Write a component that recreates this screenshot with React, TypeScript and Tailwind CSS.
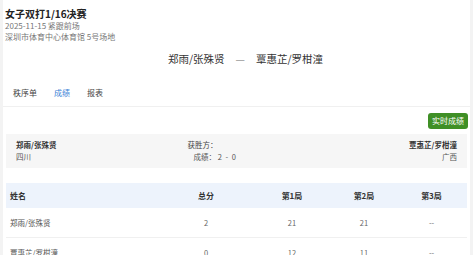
import React from 'react';

const rows = [
    { name: '郑雨/张殊贤', total: '2', g1: '21', g2: '21', g3: '--' },
    { name: '覃惠芷/罗柑潼', total: '0', g1: '12', g2: '11', g3: '--' },
];

const cols = 'grid grid-cols-[154px_92px_80px_64px_71px]';

export default function App() {
    return (
        <div
            className="w-[473px] h-[255px] overflow-hidden bg-[#f3f3f3] px-[3px]"
            style={{ fontFamily: '"Noto Sans CJK SC", "Noto Sans", sans-serif' }}
        >
            <div className="h-full bg-white">
                {/* header */}
                <div className="pl-[2px] pt-[7px]">
                    <h1 className="text-[10px] leading-[13px] font-bold text-[#222]">女子双打1/16决赛</h1>
                    <p className="text-[8px] leading-[11px] text-[#777]">2025-11-15 紧跟前场</p>
                    <p className="text-[8px] leading-[11px] text-[#777]">深圳市体育中心体育馆 5号场地</p>
                </div>

                <div className="mt-[10px] flex justify-center gap-[11px] text-[10.5px] leading-[14px] text-[#333] pl-[18px]">
                    <span>郑雨/张殊贤</span>
                    <span className="text-[#999]">—</span>
                    <span>覃惠芷/罗柑潼</span>
                </div>

                {/* tabs */}
                <div className="mt-[21px] flex gap-[17px] pl-[10px] pb-[7px] border-b border-[#f0f0f0] text-[8px] leading-[12px] text-[#444]">
                    <span>秩序单</span>
                    <span className="text-[#3b7fd6]">成绩</span>
                    <span>报表</span>
                </div>

                <div className="flex justify-end pr-[2px] pt-[6px]">
                    <button className="h-[16px] px-[4px] rounded-[3px] bg-[#3f8f26] text-white text-[8px] leading-[16px]">
                        实时成绩
                    </button>
                </div>

                {/* winner box */}
                <div className="mx-[3px] mt-[5px] h-[34px] bg-[#f6f6f6] px-[10px] py-[5px] flex text-[7.5px] leading-[12px]">
                    <div className="flex-1">
                        <div className="font-bold text-[#333]">郑雨/张殊贤</div>
                        <div className="text-[#555]">四川</div>
                    </div>
                    <div className="w-[98px]">
                        <div className="text-[#444]">获胜方：</div>
                        <div className="pl-[6px] text-[#555]">
                            成绩： <span className="tracking-[1px]">2 - 0</span>
                        </div>
                    </div>
                    <div className="flex-1 text-right">
                        <div className="font-bold text-[#333]">覃惠芷/罗柑潼</div>
                        <div className="text-[#555]">广西</div>
                    </div>
                </div>

                {/* table */}
                <div className="mx-[3px] mt-[15px]">
                    <div className={`${cols} h-[25px] items-center bg-[#edf3fc] text-[8px] font-bold text-[#333]`}>
                        <span className="pl-[4px]">姓名</span>
                        <span className="text-center">总分</span>
                        <span className="text-center">第1局</span>
                        <span className="text-center">第2局</span>
                        <span className="text-center">第3局</span>
                    </div>
                    {rows.map((r) => (
                        <div
                            key={r.name}
                            className={`${cols} h-[30px] items-center border-b border-[#f0f0f0] text-[7.5px] text-[#666]`}
                        >
                            <span className="pl-[4px] text-[#555]">{r.name}</span>
                            <span className="text-center">{r.total}</span>
                            <span className="text-center">{r.g1}</span>
                            <span className="text-center">{r.g2}</span>
                            <span className="text-center">{r.g3}</span>
                        </div>
                    ))}
                </div>
            </div>
        </div>
    );
}
